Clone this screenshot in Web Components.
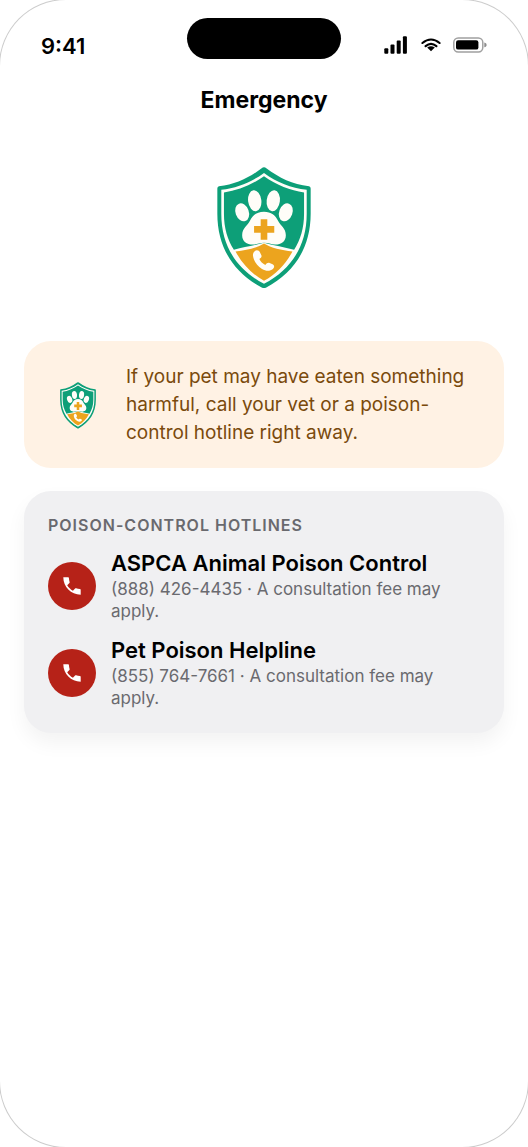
<!DOCTYPE html>
<html lang="en">
<head>
<meta charset="utf-8">
<meta name="viewport" content="width=device-width, initial-scale=1">
<title>Emergency</title>
<style>
    html, body {
        margin: 0;
        background: #ffffff;
    }
    body {
        font-family: Inter, "Liberation Sans", sans-serif;
        color: #000000;
        -webkit-font-smoothing: antialiased;
    }
</style>
</head>
<body>
<phone-screen>
    <status-bar slot="status" time="9:41"></status-bar>
    <nav-title slot="header">Emergency</nav-title>
    <pet-shield class="hero"></pet-shield>
    <notice-card>If your pet may have eaten something harmful, call your vet or a poison-control hotline right away.</notice-card>
    <hotline-card heading="Poison-Control Hotlines">
        <hotline-row name="ASPCA Animal Poison Control" phone="(888) 426-4435" note="A consultation fee may apply."></hotline-row>
        <hotline-row name="Pet Poison Helpline" phone="(855) 764-7661" note="A consultation fee may apply."></hotline-row>
    </hotline-card>
</phone-screen>

<script>
class PhoneScreen extends HTMLElement {
    constructor() {
        super();
        const shadow = this.attachShadow({ mode: 'open' });
        shadow.innerHTML = `
            <style>
                :host {
                    display: flex;
                    flex-direction: column;
                    min-height: 100vh;
                    border-radius: 66px;
                    background: #ffffff;
                    /* only shows in the rounded corners */
                    box-shadow: 0 0 0 1px #cccccc;
                }
                main {
                    display: flex;
                    flex-direction: column;
                    gap: 23px;
                    padding: 52px 24px 24px;
                }
                ::slotted(.hero) {
                    width: 94px;
                    align-self: center;
                    margin-bottom: 30px;
                }
            </style>
            <slot name="status"></slot>
            <slot name="header"></slot>
            <main><slot></slot></main>
        `;
    }
}

class StatusBar extends HTMLElement {
    constructor() {
        super();
        const shadow = this.attachShadow({ mode: 'open' });
        shadow.innerHTML = `
            <style>
                :host {
                    display: grid;
                    grid-template-columns: 1fr 154px 1fr;
                    align-items: center;
                    padding: 18px 41px 0;
                }
                time {
                    font-size: 22px;
                    line-height: 26px;
                    font-weight: 600;
                    padding-top: 15px;
                }
                .island {
                    height: 41px;
                    border-radius: 21px;
                    background: #000000;
                }
                .icons {
                    display: flex;
                    justify-content: flex-end;
                    align-items: center;
                    gap: 12px;
                    padding-top: 13px;
                }
                svg {
                    display: block;
                }
            </style>
            <time>${this.getAttribute('time')}</time>
            <div class="island"></div>
            <div class="icons">
                <svg width="25" height="18" viewBox="0 0 25 18" role="img" aria-label="Signal">
                    <rect x="0.3" y="12.3" width="4" height="5.4" rx="1"/>
                    <rect x="6.5" y="8.6" width="4" height="9.1" rx="1"/>
                    <rect x="12.7" y="4.5" width="4" height="13.2" rx="1"/>
                    <rect x="18.9" y="0.2" width="4" height="17.5" rx="1"/>
                </svg>
                <svg width="20" height="14" viewBox="0 0 20 14" role="img" aria-label="Wi-Fi">
                    <path d="M1.4 5Q10-2 18.6 5" fill="none" stroke="#000" stroke-width="2.1" stroke-linecap="round"/>
                    <path d="M4.6 8.2Q10 3.6 15.4 8.2" fill="none" stroke="#000" stroke-width="2.2" stroke-linecap="round"/>
                    <path d="M10 13.3 6.2 9.5Q10 6.8 13.8 9.5Z"/>
                </svg>
                <svg width="34" height="16" viewBox="0 0 34 16" role="img" aria-label="Battery">
                    <rect x="0.8" y="0.9" width="29" height="14" rx="4.4" fill="none" stroke="#a0a0a0" stroke-width="1.5"/>
                    <rect x="3" y="3.2" width="22.4" height="9.4" rx="2.2"/>
                    <path d="M31.3 5.5c1.9.5 2.3 1.5 2.3 2.4s-.4 1.9-2.3 2.4z" fill="#8d8d8d"/>
                </svg>
            </div>
        `;
    }
}

class NavTitle extends HTMLElement {
    constructor() {
        super();
        const shadow = this.attachShadow({ mode: 'open' });
        shadow.innerHTML = `
            <style>
                :host {
                    display: block;
                    padding-top: 26px;
                }
                h1 {
                    margin: 0;
                    font-size: 23px;
                    line-height: 30px;
                    font-weight: 700;
                    text-align: center;
                }
            </style>
            <h1><slot></slot></h1>
        `;
    }
}

class PetShield extends HTMLElement {
    constructor() {
        super();
        const shadow = this.attachShadow({ mode: 'open' });
        shadow.innerHTML = `
            <style>
                :host {
                    display: block;
                }
                svg {
                    display: block;
                    width: 100%;
                    height: auto;
                }
            </style>
            <svg viewBox="38 35 284 367" aria-hidden="true">
                <path d="M180 36Q184 36 187 39C226 68 266 88 316 93Q321 94 321 100V176C321 280 270 355 187 399Q180 403 173 399C90 355 39 280 39 176V100Q39 94 44 93C94 88 134 68 173 39Q176 36 180 36Z" fill="#0d9f78"/>
                <path d="M180 53C220 82 261 98 309 104V176C309 274 262 345 180 388C98 345 51 274 51 176V104C99 98 140 82 180 53Z" fill="#fffdf8"/>
                <path d="M180 63C219 90 259 106 301 112V176C301 219 290 255 271 285C240 277 212 273 180 264C148 273 120 277 89 285C70 255 59 219 59 176V112C101 106 141 90 180 63Z" fill="#0d9f78"/>
                <path d="M94 290C128 286 158 280 180 266C202 280 232 286 266 290C246 328 216 359 180 379C144 359 114 328 94 290Z" fill="#eca41e"/>
                <g fill="#fffdf8">
                    <ellipse cx="114" cy="172" rx="20" ry="28" transform="rotate(-20 114 172)"/>
                    <ellipse cx="152" cy="137" rx="20" ry="32" transform="rotate(-7 152 137)"/>
                    <ellipse cx="208" cy="137" rx="20" ry="32" transform="rotate(7 208 137)"/>
                    <ellipse cx="246" cy="172" rx="20" ry="28" transform="rotate(20 246 172)"/>
                    <path d="M180 170C202 170 215 181 222 197C229 212 246 220 246 241C246 260 232 269 214 269C200 269 194 264 180 264C166 264 160 269 146 269C128 269 114 260 114 241C114 220 131 212 138 197C145 181 158 170 180 170Z"/>
                    <path d="M151 290C157 284 165 286 168 293L172 302C174 307 171 310 166 313C169 321 176 327 184 331C188 326 192 323 197 325L206 329C212 332 212 339 207 343C198 350 186 350 174 343C159 334 149 319 147 305C146 299 147 294 151 290Z"/>
                </g>
                <path d="M170 193H190V213H211V234H190V255H170V234H150V213H170Z" fill="#eca41e"/>
            </svg>
        `;
    }
}

class NoticeCard extends HTMLElement {
    constructor() {
        super();
        const shadow = this.attachShadow({ mode: 'open' });
        shadow.innerHTML = `
            <style>
                :host {
                    display: flex;
                    align-items: center;
                    gap: 18px;
                    padding: 22px 24px 21px;
                    border-radius: 27px;
                    background: #fff2e4;
                }
                .badge {
                    flex: 0 0 60px;
                    display: flex;
                    justify-content: center;
                }
                pet-shield {
                    width: 36px;
                }
                p {
                    flex: 1;
                    margin: 0;
                    font-size: 19px;
                    line-height: 28px;
                    color: #7a4a0c;
                }
            </style>
            <div class="badge"><pet-shield></pet-shield></div>
            <p><slot></slot></p>
        `;
    }
}

class HotlineCard extends HTMLElement {
    constructor() {
        super();
        const shadow = this.attachShadow({ mode: 'open' });
        shadow.innerHTML = `
            <style>
                :host {
                    display: block;
                    padding: 24px;
                    border-radius: 27px;
                    background: #f0f0f2;
                    box-shadow: 0 10px 20px rgba(0, 0, 0, 0.05);
                }
                h2 {
                    margin: 0 0 14px;
                    font-size: 16px;
                    line-height: 20px;
                    font-weight: 600;
                    letter-spacing: 1px;
                    text-transform: uppercase;
                    color: #69696e;
                }
                .rows {
                    display: flex;
                    flex-direction: column;
                    gap: 14px;
                }
            </style>
            <h2>${this.getAttribute('heading')}</h2>
            <div class="rows"><slot></slot></div>
        `;
    }
}

class HotlineRow extends HTMLElement {
    constructor() {
        super();
        const shadow = this.attachShadow({ mode: 'open' });
        const phone = this.getAttribute('phone');
        shadow.innerHTML = `
            <style>
                :host {
                    display: block;
                }
                a {
                    display: flex;
                    align-items: center;
                    gap: 15px;
                    color: inherit;
                    text-decoration: none;
                }
                .call {
                    flex: 0 0 48px;
                    height: 48px;
                    display: flex;
                    align-items: center;
                    justify-content: center;
                    border-radius: 50%;
                    background: #b62218;
                }
                .call svg {
                    display: block;
                    width: 24px;
                    height: 24px;
                    fill: #ffffff;
                }
                .text {
                    flex: 1;
                }
                h3, p {
                    margin: 0;
                }
                h3 {
                    font-size: 22px;
                    line-height: 29px;
                    font-weight: 600;
                }
                p {
                    font-size: 17px;
                    line-height: 22px;
                    color: #6a6a6f;
                }
            </style>
            <a href="tel:${phone.replace(/\D/g, '')}">
                <span class="call">
                    <svg viewBox="0 0 24 24" aria-hidden="true"><path d="M3.3 3.3H8.2C8.7 3.3 8.9 3.6 8.9 4.1C9 5.5 9.2 6.8 9.6 8C9.7 8.4 9.7 8.7 9.4 9L7.2 11.2C8.7 13.6 10.5 15.3 12.9 16.7L15.1 14.5C15.4 14.2 15.7 14.2 16.1 14.3C17.3 14.7 18.5 14.9 19.9 15C20.4 15 20.7 15.3 20.7 15.8V20.7C11 20.7 3.3 13 3.3 3.3Z"/></svg>
                </span>
                <div class="text">
                    <h3>${this.getAttribute('name')}</h3>
                    <p>${phone} · ${this.getAttribute('note')}</p>
                </div>
            </a>
        `;
    }
}

customElements.define('phone-screen', PhoneScreen);
customElements.define('status-bar', StatusBar);
customElements.define('nav-title', NavTitle);
customElements.define('pet-shield', PetShield);
customElements.define('notice-card', NoticeCard);
customElements.define('hotline-card', HotlineCard);
customElements.define('hotline-row', HotlineRow);
</script>
</body>
</html>
